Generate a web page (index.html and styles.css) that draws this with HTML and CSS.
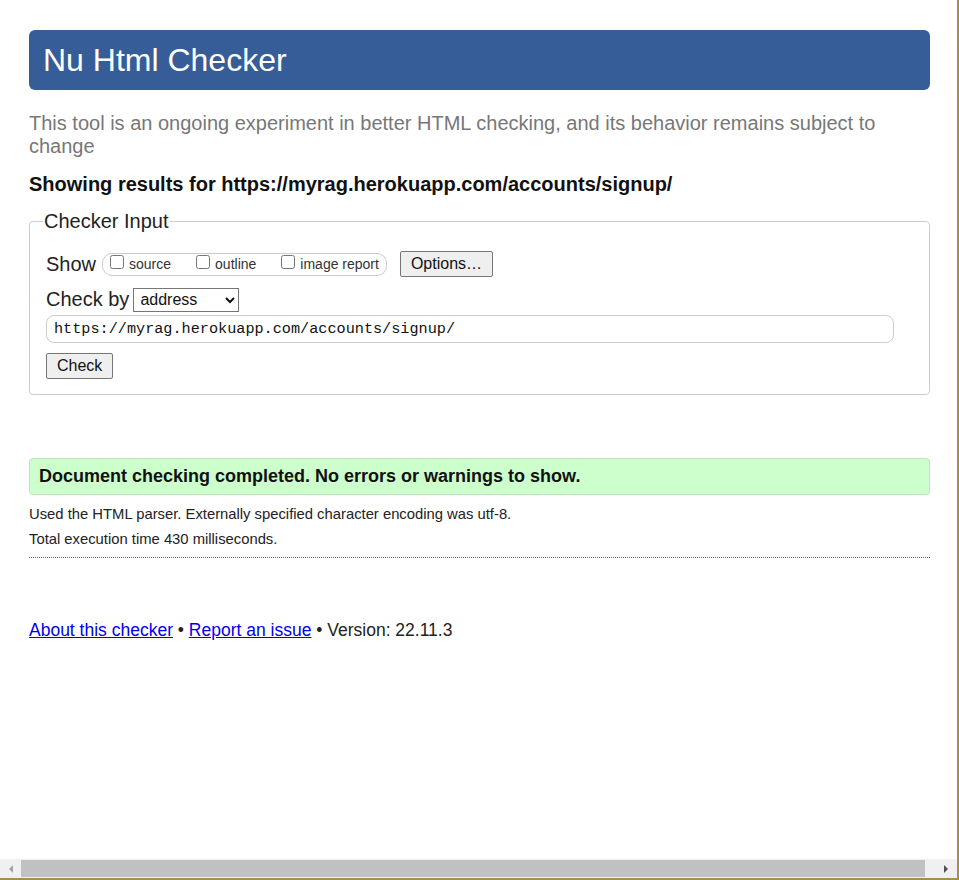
FILE: index.html
```html
<!DOCTYPE html>
<html lang="en">
<head>
<meta charset="utf-8">
<title>Showing results for https://myrag.herokuapp.com/accounts/signup/ - Nu Html Checker</title>
<link rel="stylesheet" href="styles.css">
</head>
<body>
<div class="window">
  <div class="page">
    <h1 class="banner">Nu Html Checker</h1>
    <p class="intro">This tool is an ongoing experiment in better HTML checking, and its behavior remains subject to change</p>
    <p class="results-for">Showing results for https://myrag.herokuapp.com/accounts/signup/</p>
    <fieldset class="checker">
      <legend>Checker Input</legend>
      <div class="row show-row">
        <span class="lbl">Show</span>
        <span class="opts">
          <label class="opt"><input type="checkbox"> source</label>
          <label class="opt"><input type="checkbox"> outline</label>
          <label class="opt"><input type="checkbox"> image report</label>
        </span>
        <button class="btn options" type="button">Options…</button>
      </div>
      <div class="row by-row">
        <span class="lbl">Check by</span>
        <select class="sel"><option>address</option></select>
      </div>
      <input class="url" type="text" value="https://myrag.herokuapp.com/accounts/signup/">
      <div class="row"><button class="btn check" type="button">Check</button></div>
    </fieldset>
    <p class="success">Document checking completed. No errors or warnings to show.</p>
    <p class="details">Used the HTML parser. Externally specified character encoding was utf-8.</p>
    <p class="details">Total execution time 430 milliseconds.</p>
    <hr class="dotted">
    <p class="footer"><a href="#">About this checker</a> • <a href="#">Report an issue</a> • Version: 22.11.3</p>
  </div>
  <div class="hscroll">
    <span class="cap left"><span class="arrow-l"></span></span>
    <span class="thumb"></span>
    <span class="cap right"><span class="arrow-r"></span></span>
  </div>
</div>
</body>
</html>
```
FILE: styles.css
```css
html, body {
  margin: 0;
  padding: 0;
  background: #fff;
}
body {
  font-family: "Liberation Sans", Arial, sans-serif;
  color: #222;
}
.window {
  width: 957px;
  height: 878px;
  border-right: 2px solid #a3904f;
  border-bottom: 2px solid #a3904f;
  display: flex;
  flex-direction: column;
  overflow: hidden;
}
.page {
  flex: 1;
  padding: 30px 27px 0 29px;
}
.banner {
  margin: 0;
  height: 60px;
  line-height: 60px;
  background: #365d97;
  color: #fff;
  font-size: 32px;
  font-weight: normal;
  padding: 0 14px;
  border-radius: 6px;
}
.intro {
  margin: 22px 0 0;
  font-size: 20px;
  line-height: 23px;
  color: #777;
}
.results-for {
  margin: 15px 0 0;
  font-size: 20px;
  font-weight: bold;
  line-height: 23px;
  color: #111;
}
.checker {
  margin: 14px 0 0;
  border: 1px solid #ccc;
  border-radius: 4px;
  padding: 4px 16px 15px;
}
.checker legend {
  font-size: 20px;
  line-height: 23px;
  color: #222;
  padding: 0 1px;
  margin-left: -3px;
}
.row {
  display: flex;
  align-items: center;
}
.lbl {
  font-size: 20px;
  color: #222;
}
.show-row {
  height: 26px;
  margin-top: 14px;
}
.opts {
  display: inline-flex;
  align-items: center;
  margin-left: 6px;
  height: 21px;
  border: 1px solid #ccc;
  border-radius: 10px;
  padding: 0 7px 0 5px;
}
.opt {
  display: inline-flex;
  align-items: center;
  font-size: 14px;
  color: #333;
  margin-right: 23px;
}
.opt:last-child {
  margin-right: 0;
}
.opt input {
  margin: 0 5px 4px 2px;
  width: 14px;
  height: 14px;
}
.btn {
  font-family: "Liberation Sans", Arial, sans-serif;
  font-size: 16px;
  color: #111;
  background: #efefef;
  border: 1px solid #767676;
  border-radius: 2px;
  padding: 0 10px;
  height: 26px;
}
.options {
  margin-left: 13px;
}
.by-row {
  margin-top: 10px;
  height: 25px;
}
.sel {
  margin-left: 4px;
  font-family: "Liberation Sans", Arial, sans-serif;
  font-size: 16px;
  width: 106px;
  height: 24px;
  border: 1px solid #767676;
  border-radius: 0;
  background: #fff;
  color: #111;
  padding: 0 2px;
}
.url {
  display: block;
  box-sizing: border-box;
  margin-top: 3px;
  width: 848px;
  height: 28px;
  border: 1px solid #ccc;
  border-radius: 8px;
  padding: 0 7px;
  font-family: "Liberation Mono", "DejaVu Sans Mono", monospace;
  font-size: 15.2px;
  color: #111;
  background: #fff;
}
.check {
  margin-top: 10px;
}
.success {
  margin: 63px 0 0;
  background: #ccffcc;
  border: 1px solid #bfe3bf;
  border-radius: 4px;
  height: 35px;
  line-height: 35px;
  padding: 0 9px;
  font-size: 18px;
  font-weight: bold;
  color: #111;
}
.details {
  margin: 10px 0 0;
  font-size: 14.8px;
  line-height: 18px;
  color: #222;
}
.details + .details {
  margin-top: 7px;
}
.dotted {
  margin: 9px 0 0;
  border: 0;
  border-top: 1px dotted #666;
  height: 0;
}
.footer {
  margin: 61px 0 0;
  font-size: 17.5px;
  line-height: 22px;
  color: #222;
}
.footer a {
  color: #0000ee;
}
.hscroll {
  height: 19px;
  margin-top: 1px;
  background: #f0f0f0;
  display: flex;
  align-items: center;
}
.cap {
  display: flex;
  align-items: center;
  height: 100%;
}
.cap.left {
  width: 21px;
  justify-content: center;
}
.cap.right {
  width: 32px;
  justify-content: flex-end;
  padding-right: 9px;
  box-sizing: border-box;
}
.thumb {
  flex: 1;
  height: 17px;
  background: #c1c1c1;
}
.arrow-l, .arrow-r {
  width: 0;
  height: 0;
  border-top: 4px solid transparent;
  border-bottom: 4px solid transparent;
}
.arrow-l {
  border-right: 4px solid #a3a3a3;
}
.arrow-r {
  border-left: 4px solid #505050;
}
```
